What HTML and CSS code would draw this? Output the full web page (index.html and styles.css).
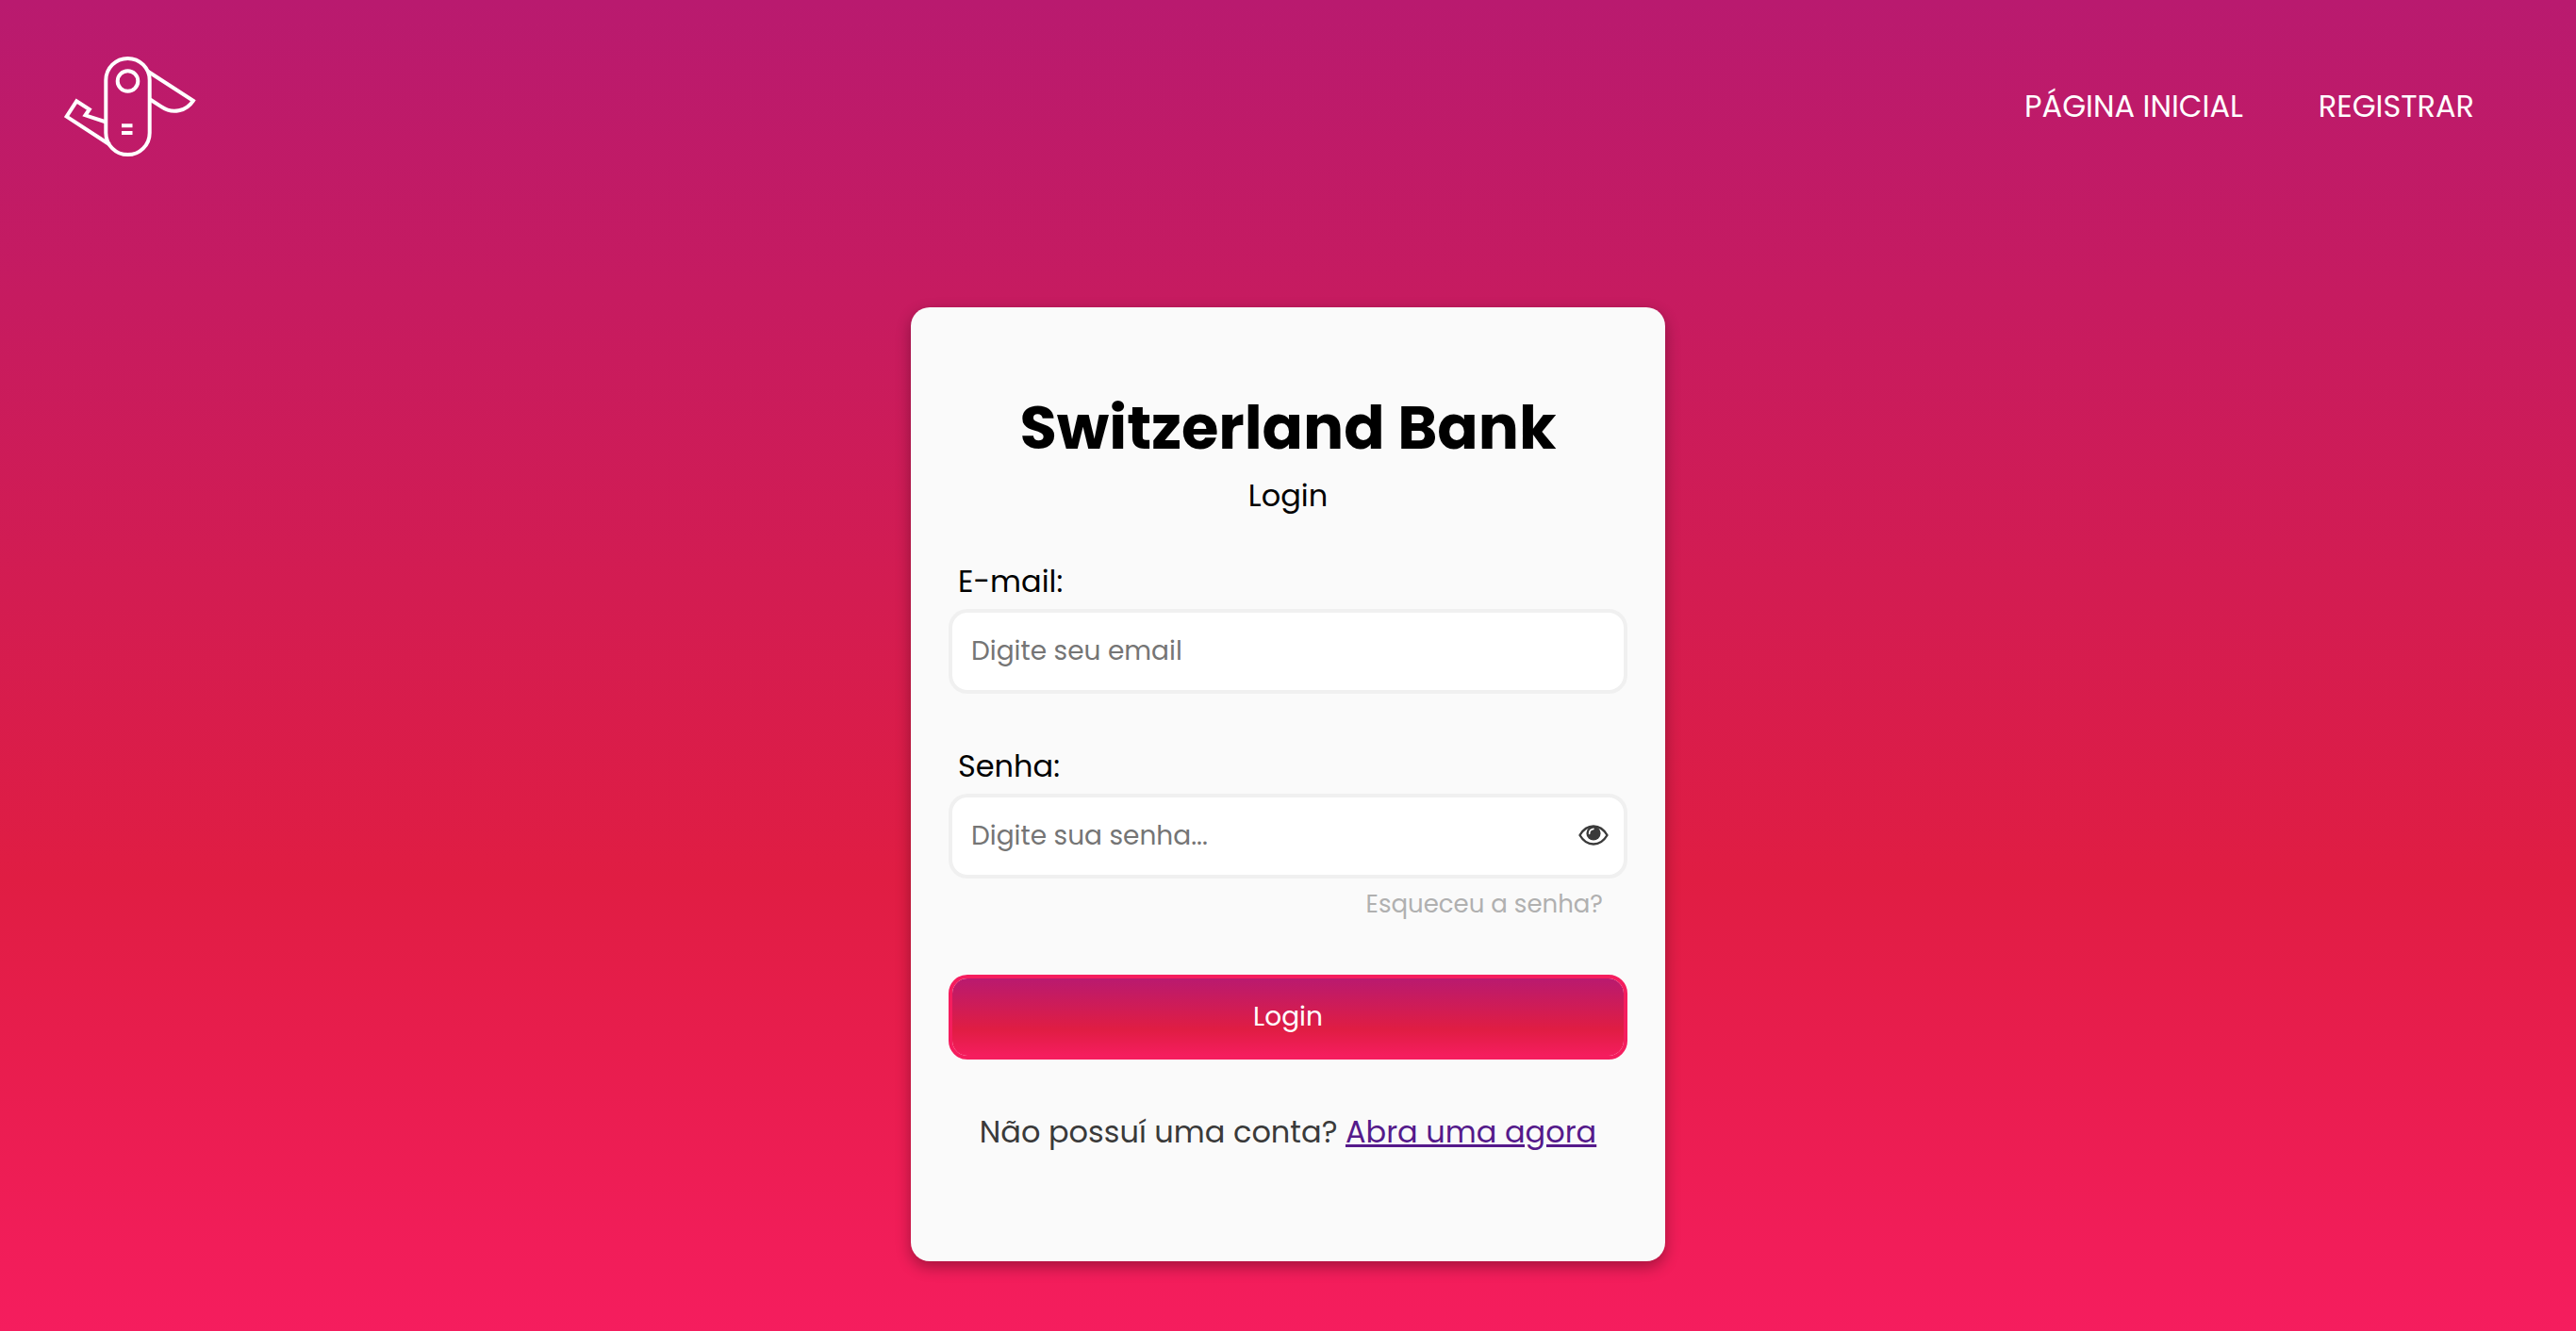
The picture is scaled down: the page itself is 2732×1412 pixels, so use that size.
FILE: index.html
```html
<!DOCTYPE html>
<html lang="pt-BR">
<head>
  <meta charset="utf-8">
  <meta name="viewport" content="width=device-width, initial-scale=1">
  <title>Switzerland Bank</title>
  <link rel="stylesheet" href="styles.css">
</head>
<body>
  <header class="header">
    <a class="logo" href="#" aria-label="Switzerland Bank">
      <svg viewBox="18 19 140 108" width="140" height="108" fill="none" stroke="#fff" stroke-width="4">
        <rect x="62.3" y="21.9" width="46.4" height="102.2" rx="23.2"/>
        <circle cx="85.5" cy="46" r="10.8"/>
        <path d="M106.5 35.5L154.900 66.800C147.500 78 133 81.500 121 73.200L109.200 65.500"/>
        <path d="M62.500 89.500L40.500 82.300L44.800 76L31.200 67.300L20.600 83.600L66.500 113.500"/>
        <path d="M79 93.300H90.500M79 101H90.500"/>
      </svg>
    </a>
    <nav class="nav">
      <a class="nav-link" href="#">PÁGINA INICIAL</a>
      <a class="nav-link" href="#">REGISTRAR</a>
    </nav>
  </header>
  <main class="main">
    <section class="card">
      <h1 class="title">Switzerland Bank</h1>
      <p class="subtitle">Login</p>
      <form class="form">
        <div class="field">
          <label class="label" for="email">E-mail:</label>
          <input class="input" id="email" type="email" placeholder="Digite seu email">
        </div>
        <div class="field">
          <label class="label" for="password">Senha:</label>
          <div class="password">
            <input class="input" id="password" type="password" placeholder="Digite sua senha...">
            <button class="toggle" type="button" aria-label="Mostrar senha">
              <svg viewBox="0 0 32 22" width="32" height="22">
                <path d="M1.500 11C5 5 10 1.500 16 1.500S27 5 30.500 11C27 17 22 20.500 16 20.500S5 17 1.500 11Z" fill="#fff" stroke="#3a3a3a" stroke-width="2.400" stroke-linejoin="round"/>
                <circle cx="16" cy="9" r="7.600" fill="#3a3a3a"/>
                <path d="M11.600 9.500C11.600 6.500 13.200 4.800 16 4.400" fill="none" stroke="#fff" stroke-width="1.600" stroke-linecap="round"/>
              </svg>
            </button>
          </div>
          <a class="forgot" href="#">Esqueceu a senha?</a>
        </div>
        <button class="submit" type="submit">Login</button>
      </form>
      <p class="signup">Não possuí uma conta? <a class="signup-link" href="#">Abra uma agora</a></p>
    </section>
  </main>
</body>
</html>
```
FILE: styles.css
```css
* {
  box-sizing: border-box;
  margin: 0;
  padding: 0;
}

body {
  min-height: 100vh;
  background: linear-gradient(#b91a6f, #e01d43 66%, #f51d5e);
  color: #000;
  font-family: Poppins, Inter, sans-serif;
  font-size: 32px;
  line-height: 48px;
}

.header {
  display: flex;
  align-items: center;
  justify-content: space-between;
  padding: 59px 108px 57px 68px;
}

.logo,
.logo svg {
  display: block;
}

.nav {
  display: flex;
  gap: 80px;
}

.nav-link {
  color: #fff;
  text-decoration: none;
}

.main {
  display: flex;
  justify-content: center;
  padding: 102px 40px 74px;
}

.card {
  width: 100%;
  max-width: 800px;
  padding: 80px 40px 113px;
  border-radius: 20px;
  background: #fafafa;
  box-shadow: 0 6px 16px rgba(0, 0, 0, 0.32);
}

.title {
  font-size: 64px;
  font-weight: 700;
  line-height: 96px;
  text-align: center;
}

.subtitle {
  text-align: center;
}

.form {
  display: flex;
  flex-direction: column;
  gap: 53px;
  margin-top: 43px;
}

.field {
  display: flex;
  flex-direction: column;
  gap: 5px;
}

.label {
  padding-left: 10px;
}

.input {
  width: 100%;
  height: 90px;
  padding: 0 20px;
  border: 4px solid #f0f0f0;
  border-radius: 20px;
  background: #fff;
  color: #000;
  font: inherit;
  font-size: 28px;
}

.input::placeholder {
  color: #757575;
}

.password {
  position: relative;
  display: flex;
}

.toggle {
  position: absolute;
  top: 33px;
  right: 20px;
  display: flex;
  border: 0;
  background: none;
}

.forgot {
  align-self: flex-end;
  padding-right: 26px;
  color: #b0b0b0;
  font-size: 26px;
  line-height: 44px;
  text-decoration: none;
}

.submit {
  height: 90px;
  border: 4px solid #f51d5e;
  border-radius: 20px;
  background: linear-gradient(#b91a6f, #e01d43 66%, #f51d5e) padding-box;
  color: #fff;
  font: inherit;
  font-size: 28px;
}

.signup {
  margin-top: 53px;
  color: #3a3a3a;
  text-align: center;
}

.signup-link {
  color: #551a8b;
}
```
